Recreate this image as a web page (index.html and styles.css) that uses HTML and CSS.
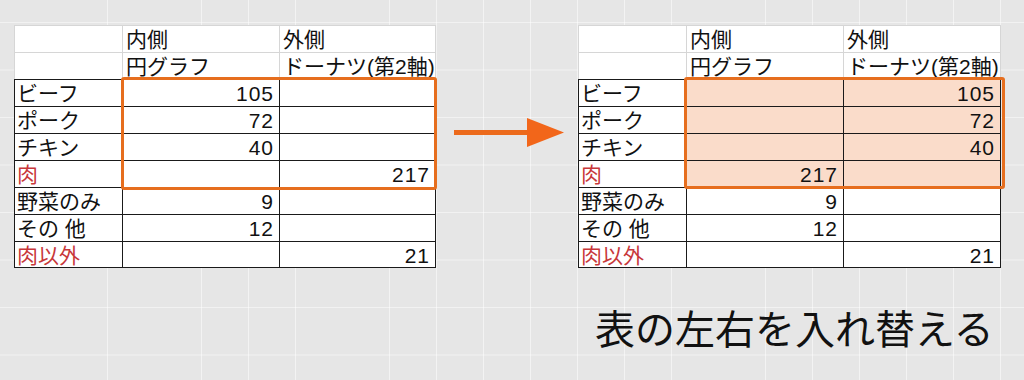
FILE: index.html
```html
<!DOCTYPE html>
<html lang="ja">
<head>
<meta charset="utf-8">
<title>表の左右を入れ替える</title>
<link rel="stylesheet" href="styles.css">
</head>
<body>
<main class="page">
  <div class="sheet">
    <div class="c hd"></div><div class="c hd">内側</div><div class="c hd last">外側</div>
    <div class="c hd"></div><div class="c hd">円グラフ</div><div class="c hd last">ドーナツ(第2軸)</div>
    <div class="c">ビーフ</div><div class="c num">105</div><div class="c num last"></div>
    <div class="c">ポーク</div><div class="c num">72</div><div class="c num last"></div>
    <div class="c">チキン</div><div class="c num">40</div><div class="c num last"></div>
    <div class="c red">肉</div><div class="c num"></div><div class="c num last">217</div>
    <div class="c">野菜のみ</div><div class="c num">9</div><div class="c num last"></div>
    <div class="c">その 他</div><div class="c num">12</div><div class="c num last"></div>
    <div class="c red bot">肉以外</div><div class="c num bot"></div><div class="c num last bot">21</div>
    <div class="sel sel-left"></div>
  </div>

  <div class="arrow">
    <svg width="110" height="30" viewBox="0 0 110 30">
      <rect x="0" y="12" width="75" height="5" fill="#ec6a1c"/>
      <polygon points="73,0 110,14.5 73,29" fill="#f2661a"/>
    </svg>
  </div>

  <div class="sheet sheet-right">
    <div class="c hd"></div><div class="c hd">内側</div><div class="c hd last">外側</div>
    <div class="c hd"></div><div class="c hd">円グラフ</div><div class="c hd last">ドーナツ(第2軸)</div>
    <div class="c">ビーフ</div><div class="c num fill"></div><div class="c num last fill">105</div>
    <div class="c">ポーク</div><div class="c num fill"></div><div class="c num last fill">72</div>
    <div class="c">チキン</div><div class="c num fill"></div><div class="c num last fill">40</div>
    <div class="c red">肉</div><div class="c num fill">217</div><div class="c num last fill"></div>
    <div class="c">野菜のみ</div><div class="c num">9</div><div class="c num last"></div>
    <div class="c">その 他</div><div class="c num">12</div><div class="c num last"></div>
    <div class="c red bot">肉以外</div><div class="c num bot"></div><div class="c num last bot">21</div>
    <div class="sel sel-right"></div>
  </div>

  <p class="caption">表の左右を入れ替える</p>
</main>
</body>
</html>
```

FILE: styles.css
```css
html, body {
  margin: 0;
  padding: 0;
}

body {
  width: 1024px;
  height: 380px;
  overflow: hidden;
  background-color: #e6e6e6;
  background-image:
    linear-gradient(to right, rgba(255, 255, 255, 0.5) 1px, transparent 1px),
    linear-gradient(to bottom, rgba(255, 255, 255, 0.5) 1px, transparent 1px);
  background-size: 47px 47.5px;
  background-position: 13px 22px;
  font-family: "Liberation Sans", "Noto Sans CJK JP", sans-serif;
  color: #111;
}

.page {
  display: grid;
  grid-template-columns: 422px 142px 423px;
  grid-template-rows: auto auto;
  padding: 25px 0 0 14px;
}

.sheet {
  position: relative;
  display: grid;
  grid-template-columns: 108px 157px 157px;
  grid-auto-rows: 27px;
  background: #fff;
}

.sheet-right {
  grid-template-columns: 108px 157px 158px;
}

.c {
  box-sizing: border-box;
  border-top: 1px solid #1a1a1a;
  border-left: 1px solid #1a1a1a;
  font-size: 21px;
  line-height: 25px;
  padding: 1px 0 0 2px;
  white-space: nowrap;
}

.c.last {
  border-right: 1px solid #1a1a1a;
}

.c.bot {
  border-bottom: 1px solid #1a1a1a;
}

.c.hd {
  border-top-color: #d6d6d6;
  border-left-color: #d6d6d6;
  padding-left: 3px;
}

.c.hd.last {
  border-right-color: #d6d6d6;
}

.num {
  text-align: right;
  padding: 1px 5px 0 0;
  letter-spacing: 1px;
}

.red {
  color: #c8373a;
}

.fill {
  background: #fadcca;
}

.sel {
  position: absolute;
  box-sizing: border-box;
  border: 3px solid #e66e1e;
  border-radius: 3px;
  top: 52px;
}

.sel-left {
  left: 107px;
  width: 316px;
  height: 113px;
}

.sel-right {
  left: 106px;
  width: 321px;
  height: 112px;
}

.arrow {
  align-self: start;
  margin: 93px 0 0 18px;
  line-height: 0;
}

.caption {
  grid-column: 3;
  margin: 38px 0 0 17px;
  font-size: 40px;
  line-height: 48px;
  font-weight: 400;
  color: #111;
  white-space: nowrap;
}
```
